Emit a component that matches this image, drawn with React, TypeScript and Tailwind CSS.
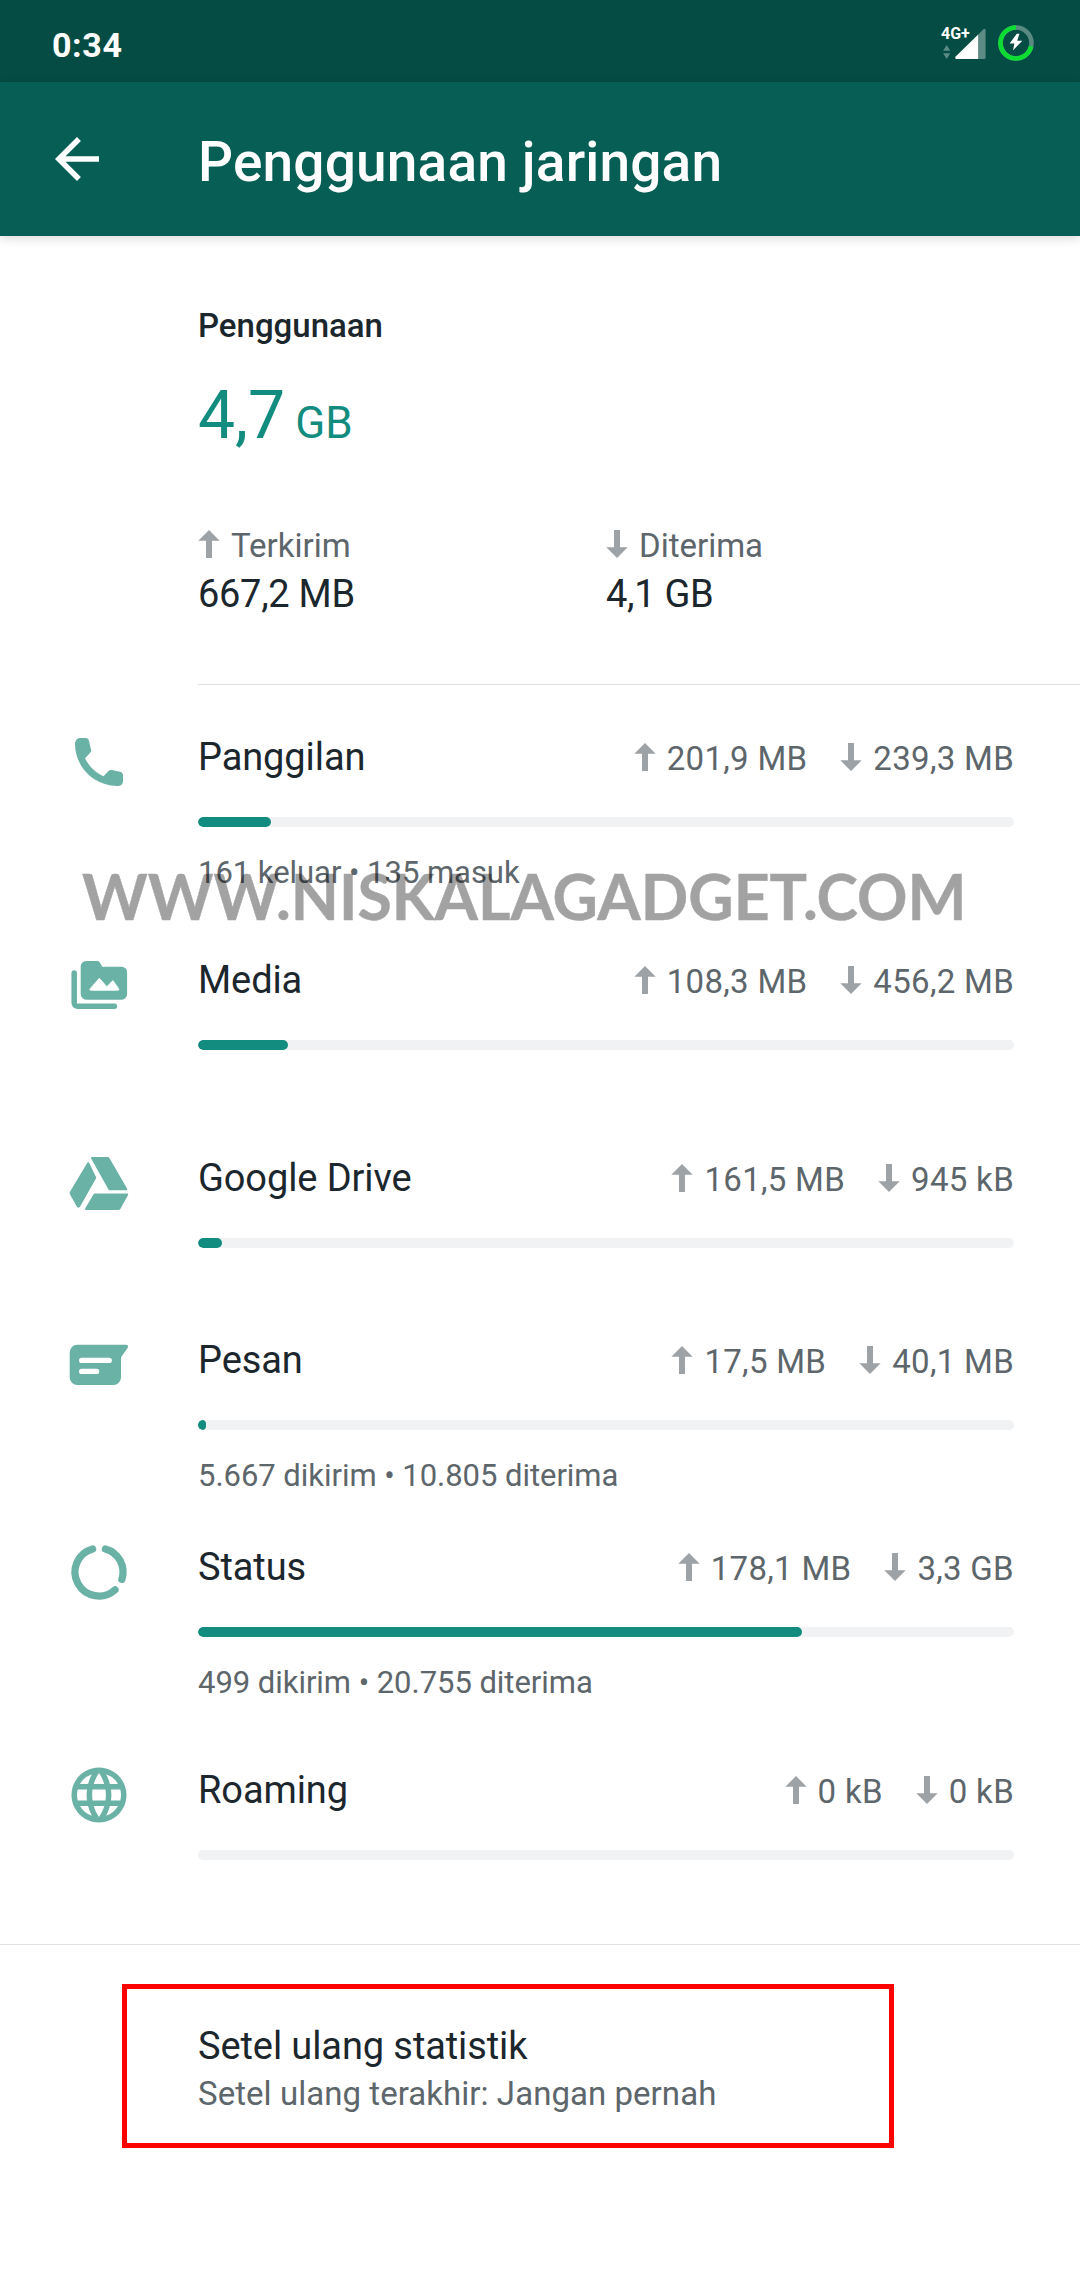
import { ReactNode } from 'react';
import { MdArrowBack, MdLanguage } from 'react-icons/md';

function PhoneIcon() {
    return (
        <svg viewBox="0 0 66 66" className="h-full w-full" fill="currentColor">
            <path d="M9 15.5C9 11.5 11 9 14.5 9H19.5C21.5 9 22.6 10 23 12L25 20.5C25.3 22 25 23 24 24L19 29.3C23.5 37.8 29 43.2 37.6 47.2L42.5 42C43.5 41 44.6 40.7 46 41L54 42.8C56 43.3 57 44.4 57 46.4V51.5C57 55.4 55 57 51 57C28 56.5 9.5 38.5 9 15.5Z" />
        </svg>
    );
}

function MediaIcon() {
    return (
        <svg viewBox="0 0 66 66" className="h-full w-full" fill="currentColor">
            <path d="M20.2 9H31.4C32.3 9 33 9.4 33.4 10.1L36.4 14.7H55.6A5.5 5.5 0 0 1 61.1 20.2V42.2A5.5 5.5 0 0 1 55.6 47.7H20.2A5.5 5.5 0 0 1 14.7 42.2V14.5A5.5 5.5 0 0 1 20.2 9Z" />
            <path d="M8.2 21V51A3.3 3.3 0 0 0 11.5 54.3H48.4" fill="none" stroke="currentColor" strokeWidth="5.5" strokeLinecap="round" />
            <path d="M24.4 36.5L33.3 26.2L40.8 34.7L46.9 28.6L52.6 36.5Q53.6 38.2 51.8 38.3H25.2Q22.8 38.2 24.4 36.5Z" fill="#fff" stroke="#fff" strokeWidth="0.8" strokeLinejoin="round" />
        </svg>
    );
}

function DriveIcon() {
    return (
        <svg viewBox="0 0 66 66" className="h-full w-full" fill="currentColor" stroke="currentColor" strokeWidth="2" strokeLinejoin="round">
            <path d="M22.2 13.2L29.2 27.7L13 56.4Q12.4 56.8 11.8 56.2L4.8 43.8Q4.4 43 4.8 42.2Z" />
            <path d="M26 8H41.5Q42.3 8 42.7 8.7L60.3 39.3H43.5Z" />
            <path d="M28.6 44.6H61.2L53.6 58.3Q53.1 59 52.3 59H20Z" />
        </svg>
    );
}

function MessageIcon() {
    return (
        <svg viewBox="0 0 66 66" className="h-full w-full" fill="currentColor">
            <path d="M11.2 12.7H60Q63 13 61.6 16L55 25.3V45.5A7.5 7.5 0 0 1 47.5 53H11.2A7.5 7.5 0 0 1 3.7 45.5V20.2A7.5 7.5 0 0 1 11.2 12.7Z" />
            <path d="M15.7 28.4H43.2M15.7 39.4H30.6" stroke="#fff" strokeWidth="5.4" strokeLinecap="round" />
        </svg>
    );
}

function StatusIcon() {
    return (
        <svg viewBox="0 0 66 66" className="h-full w-full" fill="none" stroke="currentColor" strokeWidth="7.3" strokeLinecap="round">
            <path d="M39.4 9.9A24 24 0 0 1 55.9 40.3" />
            <path d="M26.6 9.9A24 24 0 1 0 49 50.9" />
        </svg>
    );
}

function Arrow({ down = false }: { down?: boolean }) {
    return (
        <svg viewBox="0 0 22 28" className={`-mt-1 h-7 w-[22px] shrink-0 text-[#9da2a6] ${down ? 'rotate-180' : ''}`} fill="currentColor">
            <path d="M11 0L21.7 10.7H14V28H8V10.7H0.3Z" />
        </svg>
    );
}

function Amount({ down, children }: { down?: boolean; children: ReactNode }) {
    return (
        <div className="flex items-center gap-[11px]">
            <Arrow down={down} />
            <span className="text-[33px] leading-[44px] text-[#5d666b]">{children}</span>
        </div>
    );
}

const rows = [
    { name: 'Panggilan', icon: <PhoneIcon />, sent: '201,9 MB', received: '239,3 MB', percent: 9, detail: '161 keluar • 135 masuk', height: 'h-[223px]' },
    { name: 'Media', icon: <MediaIcon />, sent: '108,3 MB', received: '456,2 MB', percent: 11, detail: '', height: 'h-[198px]' },
    { name: 'Google Drive', icon: <DriveIcon />, sent: '161,5 MB', received: '945 kB', percent: 3, detail: '', height: 'h-[182px]' },
    { name: 'Pesan', icon: <MessageIcon />, sent: '17,5 MB', received: '40,1 MB', percent: 1, detail: '5.667 dikirim • 10.805 diterima', height: 'h-[207px]' },
    { name: 'Status', icon: <StatusIcon />, sent: '178,1 MB', received: '3,3 GB', percent: 74, detail: '499 dikirim • 20.755 diterima', height: 'h-[223px]' },
    { name: 'Roaming', icon: <MdLanguage className="h-full w-full" />, sent: '0 kB', received: '0 kB', percent: 0, detail: '', height: 'h-[176px]' },
];

function StatusBar() {
    return (
        <div className="flex h-[82px] items-start justify-between bg-[#054d44] pl-[52px] pr-[46px] text-white">
            <span className="mt-6 text-[34px] font-bold leading-[42px] tracking-[0.6px]">0:34</span>
            <div className="mt-6 flex gap-3">
                <div className="relative h-9 w-[46px]">
                    <span className="absolute left-px top-0 text-[16px] font-bold leading-5">4G+</span>
                    <svg viewBox="0 0 46 36" className="h-full w-full" fill="#fff">
                        <path d="M6.7 21L10.3 26.7H3.1ZM6.7 35L10.3 29.2H3.1Z" opacity="0.35" />
                        <path d="M38.2 10.5L43.4 5.2Q45.6 4 45.6 6.4V33.5Q45.6 35 44 35H38.2Z" opacity="0.35" />
                        <path d="M38.2 10.5V35H16Q14.3 34.2 15.7 32.6Z" />
                    </svg>
                </div>
                <svg viewBox="0 0 36 36" className="mt-px h-9 w-9" fill="none" strokeWidth="4.6">
                    <circle cx="18" cy="18" r="15.5" stroke="#5a8982" />
                    <path d="M33.1 21.3A15.5 15.5 0 1 1 18 2.5" stroke="#0ddc33" />
                    <path d="M18.8 8.8L11.6 18.6H16.4L15 25.2L24.3 15.8H19.2L21.4 8.8Z" fill="#fff" />
                </svg>
            </div>
        </div>
    );
}

export default function App() {
    return (
        <div className="relative h-[2280px] w-[1080px] overflow-hidden bg-white font-['Roboto',sans-serif] text-[#1b262d]">
            <StatusBar />
            <header className="flex h-[154px] items-center bg-[#075e54] pl-11 text-white shadow-[0_2px_10px_rgba(0,0,0,0.16)]">
                <MdArrowBack className="h-[66px] w-[66px]" />
                <h1 className="ml-[88px] mt-[5px] text-[55px] font-medium leading-[64px] tracking-[0.17px]">Penggunaan jaringan</h1>
            </header>

            {/* Total usage */}
            <section className="ml-[198px] h-[449px] border-b border-[#e0e1e2] pt-[68px]">
                <h2 className="text-[33px] font-medium leading-[44px]">Penggunaan</h2>
                <div className="mt-[28px] flex h-20 items-baseline gap-[10px] text-[#128c7e]">
                    <span className="text-[66px] leading-[80px]">4,7</span>
                    <span className="text-[44px] leading-none">GB</span>
                </div>
                <div className="mt-[68px] grid w-[816px] grid-cols-2">
                    <div>
                        <Amount>Terkirim</Amount>
                        <p className="mt-[4px] text-[38px] leading-[44px] tracking-[-0.3px]">667,2 MB</p>
                    </div>
                    <div>
                        <Amount down>Diterima</Amount>
                        <p className="mt-[4px] text-[38px] leading-[44px] tracking-[-0.3px]">4,1 GB</p>
                    </div>
                </div>
            </section>

            {/* Usage by category */}
            <section className="border-b border-[#e0e1e2] pt-[50px]">
                {rows.map((row) => (
                    <div key={row.name} className={`flex pl-[66px] ${row.height}`}>
                        <div className="-mt-1.5 h-[66px] w-[66px] shrink-0 text-[#6bb2a6]">{row.icon}</div>
                        <div className="ml-[66px] w-[816px]">
                            <div className="flex h-11 items-start justify-between">
                                <span className="text-[38px] leading-[44px] tracking-[-0.1px]">{row.name}</span>
                                <div className="flex gap-[33px] pt-0.5 tracking-[0.3px]">
                                    <Amount>{row.sent}</Amount>
                                    <Amount down>{row.received}</Amount>
                                </div>
                            </div>
                            <div className="mt-[38px] h-2.5 overflow-hidden rounded-full bg-[#f1f2f4]">
                                <div className="h-full rounded-full bg-[#128c7e]" style={{ width: `${row.percent}%` }} />
                            </div>
                            {row.detail && <p className="mt-[26px] text-[31px] leading-[40px] tracking-[-0.04px] text-[#5d666b]">{row.detail}</p>}
                        </div>
                    </div>
                ))}
            </section>

            {/* Reset statistics */}
            <section className="ml-[122px] mt-[39px] h-[164px] w-[772px] border-[5px] border-[#ff0000] pl-[71px] pt-[35px]">
                <p className="text-[38px] leading-[44px] tracking-[-0.1px]">Setel ulang statistik</p>
                <p className="mt-[4px] text-[33px] leading-[44px] tracking-[0.05px] text-[#5d666b]">Setel ulang terakhir: Jangan pernah</p>
            </section>

            <div className="pointer-events-none absolute left-[82px] top-[858px] whitespace-nowrap font-['Lato',sans-serif] text-[62.5px] font-bold leading-[75px] text-black opacity-36 [-webkit-text-stroke:0.5px_#000]">
                WWW.NISKALAGADGET.COM
            </div>
        </div>
    );
}
